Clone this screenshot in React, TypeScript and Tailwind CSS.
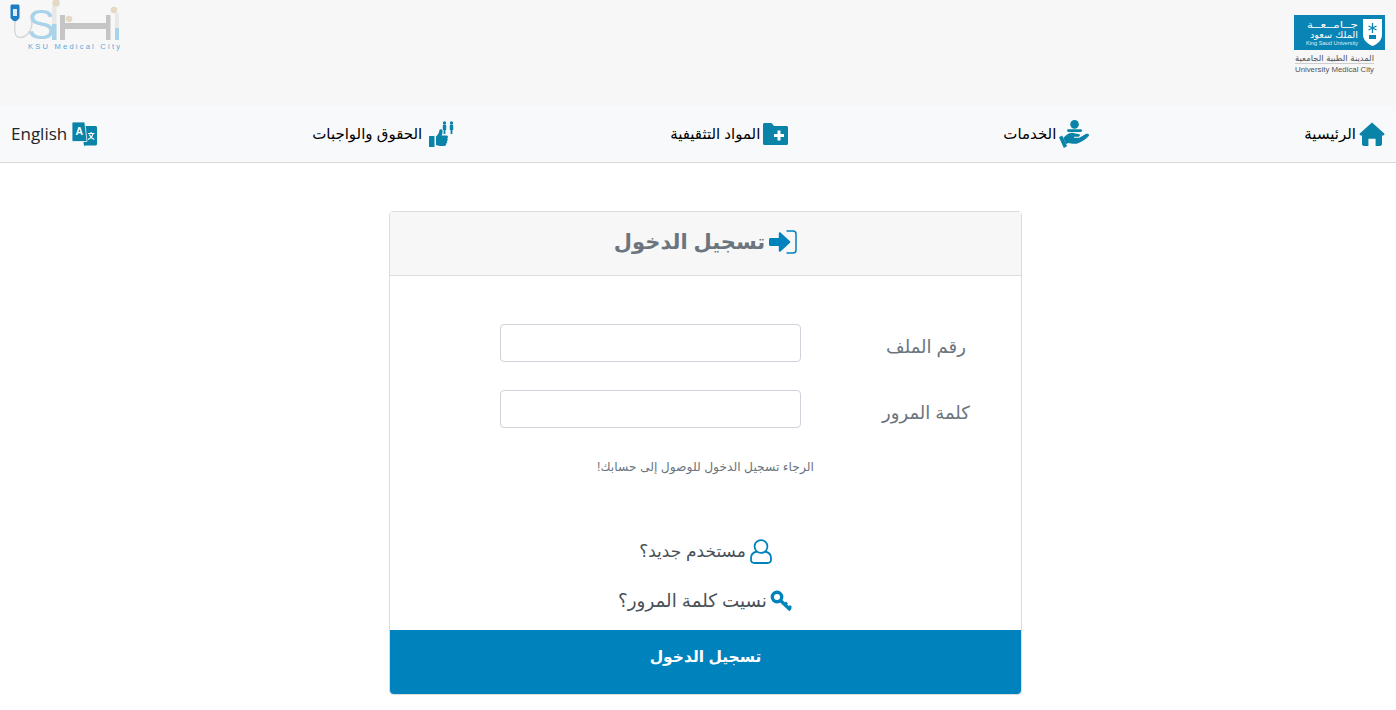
import React from 'react';

const teal = '#0a83a8';

const HomeIcon = () => (
  <svg width="26" height="24" viewBox="0 0 26 24" fill={teal}>
    <path d="M13 .5 25 11.200c.9.900.3 2.300-.9 2.300H23v8.600c0 1-.8 1.900-1.800 1.900H16.600v-7.200H9.400V24H4.800C3.800 24 3 23.100 3 22.100v-8.600H1.900C.7 13.500.1 12.100 1 11.200L13 .5Z" />
  </svg>
);

const HandIcon = () => (
  <svg width="30" height="28" viewBox="0 0 28 26" fill={teal}>
    <circle cx="14.500" cy="4" r="4" />
    <rect x="7.500" y="8.500" width="14" height="2.600" rx="1.300" />
    <path d="M7 14c3-2.500 6-2.500 8-1.500l3 .5c2 0 2 2.500 0 2.500h-4v1h5l6-3.500c2-1 4 .5 2.500 2-3 3-7 6-11 7-3 .5-5 0-8-.5l-2 1-2.500-6Z" />
    <path d="m0 16 3-1.500 4.500 10-3 1.500-4.500-10Z" />
  </svg>
);

const FolderIcon = () => (
  <svg width="25" height="22" viewBox="0 0 25 22">
    <path fill={teal} d="M1.500 0h7l2.500 3h12.500c.8 0 1.500.7 1.500 1.500v16c0 .8-.7 1.500-1.500 1.500h-22C.7 22 0 21.300 0 20.500v-19C0 .7.700 0 1.500 0Z" />
    <path fill="#fff" d="M14.500 7.500h3v3.500H21v3h-3.500v3.500h-3V14H11v-3h3.500V7.500Z" />
  </svg>
);

const RightsIcon = () => (
  <svg width="30" height="26" viewBox="-4 0 30 26" fill={teal}>
    <rect x="0" y="15" width="5.500" height="11" rx=".5" />
    <path d="M7 15.500c2-1.500 3-3.500 3.500-6.500.2-1 2.500-1 3 .8.300 1.600-.2 3-.8 4.700h4.800c1.800 0 1.900 2.300.7 2.800.9.800.7 2.300-.3 2.700.5 1 .2 2-.7 2.500.3 1.500-.7 2.500-2 2.500H11c-1.700 0-3-.5-4-1.200V15.500Z" />
    <circle cx="15.500" cy="2" r="1.700" />
    <path d="M13.800 4.500c0-.4.300-.7.700-.7h2c.4 0 .7.300.7.700V9h-.8v4h-1.800V9h-.8V4.500Z" />
    <circle cx="22.500" cy="2" r="1.700" />
    <path d="M20.800 4.500c0-.4.300-.7.700-.7h2c.4 0 .7.300.7.700V9h-.8v4h-1.800V9h-.8V4.500Z" />
  </svg>
);

const TranslateIcon = () => (
  <svg width="25" height="25" viewBox="0 0 25 25">
    <path fill={teal} d="M10 4h13.500c.8 0 1.500.7 1.500 1.500V22c0 .8-.7 1.500-1.500 1.500H12L10 4Z" />
    <path fill={teal} d="m11.500 21 2.300-.3-1 3.800-1.300-3.500Z" />
    <path fill={teal} stroke="#f8f9fa" strokeWidth=".8" d="M1.500 0h11.300L15 19.500H1.500C.7 19.500 0 18.800 0 18V1.500C0 .7.700 0 1.500 0Z" />
    <text x="7.400" y="13" fontSize="10.500" fontWeight="700" fill="#fff" textAnchor="middle" fontFamily="'Liberation Sans', sans-serif">A</text>
    <path fill="none" stroke="#fff" strokeWidth="1.200" d="M16 11.500h6.500M19.200 10v1.500M21 11.500c-.6 3-2.600 5-5 6M17.300 12.500c.8 2.200 2.600 4 5 5" />
  </svg>
);

const SignInIcon = () => (
  <svg width="28" height="24" viewBox="0 0 28 24" fill="#0082bd">
    <path d="M11.500 2.500 21 11.300c.4.400.4 1 0 1.400l-9.500 8.800c-.6.600-1.700.1-1.700-.7v-4.800H1.500c-.8 0-1.500-.7-1.500-1.500V9.500C0 8.700.7 8 1.500 8h8.300V3.200c0-.8 1.100-1.300 1.700-.7Z" />
    <path fill="none" stroke="#0082bd" strokeWidth="1.500" d="M17.500 1h6.500C25.700 1 27 2.300 27 4v16c0 1.700-1.300 3-3 3h-6.500" />
  </svg>
);

const UserIcon = () => (
  <svg width="22" height="25" viewBox="0 0 22 25" fill="none" stroke="#0082bd" strokeWidth="1.800">
    <circle cx="11" cy="7.500" r="6.400" />
    <path d="M7 12.500c-3.500.7-6 3-6 6.500v1.500C1 22.500 2.500 24 4.500 24h13c2 0 3.500-1.500 3.500-3.500V19c0-3.500-2.500-5.800-6-6.500" />
  </svg>
);

const KeyIcon = () => (
  <svg width="23" height="23" viewBox="0 0 23 23" fill="none" stroke="#0082bd">
    <circle cx="7" cy="7" r="4.700" strokeWidth="3.400" />
    <path strokeWidth="3.400" d="m10.500 10.500 10 9.500" />
    <path strokeWidth="2.800" d="m17 12.500-3 3M21 16l-3 3" />
  </svg>
);

const SihiLogo = () => (
  <svg width="125" height="54" viewBox="0 0 125 54">
    <path d="M10.500 6c0-.8.700-1.500 1.500-1.500h6c.8 0 1.500.7 1.500 1.500v12c-1 1.500-3 3-4.500 3.500-1.500-.5-3.500-2-4.500-3.500V6Z" fill="#1d7cc4" />
    <rect x="13" y="9" width="4" height="7" fill="#dcecf6" />
    <path d="M15 21c0 7-1.500 12 1.500 15 3 2.500 8 1.500 11-2 3-3.500 5.500-8 4-13" fill="none" stroke="#d4d4d4" strokeWidth="1.300" />
    <text x="27" y="39" fontSize="42" fontFamily="'Liberation Sans', sans-serif" fill="#a9d3e8">S</text>
    <rect x="52" y="6" width="4.500" height="34" fill="#e8e8e8" />
    <rect x="52" y="24" width="4.500" height="16" fill="#a9d3e8" />
    <circle cx="56" cy="3" r="3.800" fill="#e3d9c6" />
    <circle cx="69" cy="19" r="3.300" fill="#e3d9c6" />
    <rect x="60" y="15" width="5" height="25" fill="#c5c5c5" />
    <rect x="64" y="23" width="44" height="6" fill="#c5c5c5" />
    <rect x="106" y="15" width="4.500" height="25" fill="#c5c5c5" />
    <circle cx="114" cy="10" r="3.300" fill="#e3d9c6" />
    <rect x="115" y="13" width="4" height="27" fill="#e8e8e8" />
    <rect x="115" y="28" width="4" height="12" fill="#a9d3e8" />
    <text x="28" y="49" fontSize="7.500" fontFamily="'Liberation Sans', sans-serif" fill="#5aa9d6" textLength="92" lengthAdjust="spacing">KSU Medical City</text>
  </svg>
);

const KsuLogo = () => (
  <svg width="91" height="60" viewBox="0 0 91 60">
    <rect x="0" y="0" width="91" height="35" fill="#0a84b4" />
    <text x="64" y="13" fontSize="9" direction="rtl" textLength="51" lengthAdjust="spacingAndGlyphs" fontFamily="'DejaVu Sans', sans-serif" fill="#fff">جــامــعــة</text>
    <text x="64" y="23" fontSize="9" direction="rtl" textLength="48" lengthAdjust="spacingAndGlyphs" fontFamily="'DejaVu Sans', sans-serif" fill="#fff">الملك سعود</text>
    <text x="12" y="30" fontSize="5" textLength="52" lengthAdjust="spacingAndGlyphs" fontFamily="'Liberation Sans', sans-serif" fill="#dff1f8">King Saud University</text>
    <path d="M69 4h19v16c0 5-4.500 9-9.500 11C74 29 69 25 69 20V4Z" fill="#fff" />
    <path d="M78.500 8v10M74.500 11l8 4M82.500 11l-8 4" stroke="#0a84b4" strokeWidth="1.300" />
    <rect x="75" y="20" width="7" height="4" fill="#0a84b4" />
    <text x="80" y="46" fontSize="8.500" direction="rtl" textLength="79" lengthAdjust="spacingAndGlyphs" fontFamily="'DejaVu Sans', sans-serif" fill="#555">المدينة الطبية الجامعية</text>
    <rect x="1" y="48" width="79" height=".7" fill="#bbb" />
    <text x="1" y="57" fontSize="7.500" textLength="79" lengthAdjust="spacingAndGlyphs" fontFamily="'Liberation Sans', sans-serif" fill="#555">University Medical City</text>
  </svg>
);

const navItems = [
  { label: 'الرئيسية', icon: <HomeIcon /> },
  { label: 'الخدمات', icon: <HandIcon /> },
  { label: 'المواد التثقيفية', icon: <FolderIcon /> },
  { label: 'الحقوق والواجبات', icon: <RightsIcon /> },
];

export default function App() {
  return (
    <div dir="rtl" className="min-h-[710px] bg-white font-['Liberation_Sans','DejaVu_Sans',sans-serif] text-[#212529]">
      <header className="flex h-[106px] items-start justify-between bg-[#f7f7f8] pr-[11px]">
        <div dir="ltr" className="mt-[15px]"><KsuLogo /></div>
        <div dir="ltr" className="w-[125px]"><SihiLogo /></div>
      </header>

      <nav className="flex h-[57px] items-center justify-between border-b border-[#d8d8d8] bg-[#f8f9fa] px-[11px]">
        {navItems.map(item => (
          <a key={item.label} className="flex items-center gap-[3px] text-[15px] leading-6 text-black">
            {item.icon}
            <span>{item.label}</span>
          </a>
        ))}
        <a className="flex items-center gap-[5px] font-['Open_Sans',sans-serif] text-[17px] leading-6 text-[#212529]">
          <TranslateIcon />
          <span>English</span>
        </a>
      </nav>

      <main className="flex justify-center pl-[15px] pt-[48px]">
        <div className="w-[633px] rounded border border-[#dcdcdc]">
          <div className="flex h-[64px] items-center justify-center gap-[4px] border-b border-[#dcdcdc] bg-[#f7f7f7] pb-[4px] text-[#6c757d]">
            <SignInIcon />
            <h1 className="text-[21px] font-bold">تسجيل الدخول</h1>
          </div>

          <div className="flex flex-col pt-[48px]">
            <div className="flex items-center">
              <label className="w-[190px] pt-[8px] text-center text-[18px] text-[#6c757d]">رقم الملف</label>
              <input className="mr-[30px] h-[38px] w-[301px] rounded border border-[#ced4da] bg-white" />
            </div>
            <div className="mt-[28px] flex items-center">
              <label className="w-[190px] pt-[8px] text-center text-[18px] text-[#6c757d]">كلمة المرور</label>
              <input type="password" className="mr-[30px] h-[38px] w-[301px] rounded border border-[#ced4da] bg-white" />
            </div>
            <p className="mt-[30px] text-center text-[12.300px] leading-[18px] text-[#6c757d]">الرجاء تسجيل الدخول للوصول إلى حسابك!</p>

            <a className="mt-[63px] flex items-center justify-center gap-[4px] text-[17px] leading-6 text-[#495057]">
              <UserIcon />
              <span>مستخدم جديد؟</span>
            </a>
            <a className="mt-[25px] flex items-center justify-center gap-[3px] text-[18.300px] leading-6 text-[#495057]">
              <KeyIcon />
              <span>نسيت كلمة المرور؟</span>
            </a>

            <button className="mt-[17px] h-[64px] rounded-b bg-[#0082bd] pb-[10px] text-[15.500px] font-bold text-white">تسجيل الدخول</button>
          </div>
        </div>
      </main>
    </div>
  );
}
